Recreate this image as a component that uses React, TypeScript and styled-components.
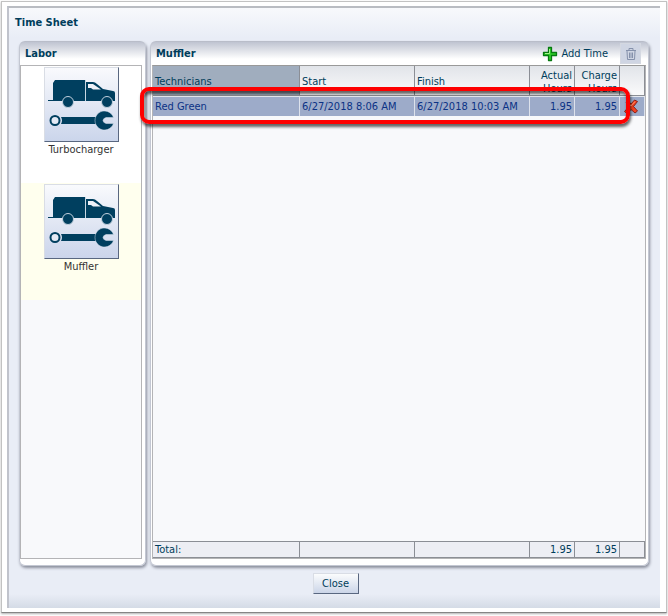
import React from "react";
import styled, { createGlobalStyle } from "styled-components";

const GlobalStyle = createGlobalStyle`
  *, *::before, *::after { box-sizing: border-box; }
  body {
    margin: 0;
    background: #fff;
    color: #003d5b;
    font-family: "DejaVu Sans Condensed", "Noto Sans", sans-serif;
    font-size: 11px;
    line-height: 13px;
  }
  button { font: inherit; color: inherit; margin: 0; padding: 0; }
`;

const Frame = styled.div`
  display: flex;
  height: 100vh;
  padding: 1px 1px 3px 1px;
`;

const Sheet = styled.div`
  flex: 1;
  display: flex;
  min-width: 0;
  padding: 4px 6px 4px 5px;
  background: #fff;
  border: 1px solid #c2c2c2;
  border-bottom-color: #858585;
  box-shadow: 0 1px 2px #b0b0b0;
`;

const Dialog = styled.main`
  flex: 1;
  display: flex;
  flex-direction: column;
  min-width: 0;
  padding: 4px 11px 0 10px;
  border-left: 2px solid #c0c3cc;
  border-top: 2px solid #b9bcc2;
  background: linear-gradient(#f8f9fc 0, #e9edf6 30px, #e9edf6 calc(100% - 14px), #d4dbe6 100%);
`;

const Title = styled.h1`
  margin: 0 0 0 -4px;
  padding: 4px 0 12px;
  font-size: 11px;
  line-height: 13px;
`;

const Panels = styled.div`
  flex: 1;
  display: grid;
  grid-template-columns: 127px minmax(0, 1fr);
  gap: 4px;
  min-height: 0;
`;

const Panel = styled.section`
  display: flex;
  flex-direction: column;
  min-width: 0;
  padding: 0 3px 6px 1px;
  border: 1px solid #c3c7d2;
  border-top-color: #b9bdc9;
  border-radius: 6px;
  background: linear-gradient(#bfc4d1 0, #fff 17px);
  box-shadow: 1px 2px 3px #8b8f9c;
`;

const PanelHeader = styled.header`
  display: flex;
  align-items: center;
  height: 23px;
  padding-left: 4px;
`;

const PanelTitle = styled.h2`
  flex: 1;
  margin: 0;
  font-size: 11px;
  line-height: 13px;
`;

const LaborList = styled.div`
  flex: 1;
  border: 1px solid #b4b4b6;
  background: #f8f9fb;
  margin-left: -1px;
`;

const LaborItem = styled.div<{ $selected?: boolean }>`
  display: flex;
  flex-direction: column;
  align-items: center;
  height: 117px;
  padding-top: 1px;
  background: ${(p) => (p.$selected ? "#ffffee" : "#fff")};
  color: #333;
`;

const LaborButton = styled.button`
  display: block;
  width: 75px;
  height: 75px;
  border: 1px solid #d9dde5;
  border-right-color: #596780;
  border-bottom-color: #596780;
  background: linear-gradient(#f9fafd, #cbd5eb);
`;

const LaborLabel = styled.label`
  margin-top: 1px;
`;

const AddButton = styled.button`
  display: flex;
  align-items: center;
  gap: 4px;
  margin-right: 12px;
  border: 0;
  background: none;
`;

const TrashButton = styled.button`
  display: grid;
  place-items: center;
  width: 21px;
  height: 21px;
  margin-right: 4px;
  border: 1px solid #d4d8e1;
  background: #cfd5e3;
`;

const Table = styled.table`
  flex: 1;
  display: flex;
  flex-direction: column;
  border: 1px solid #b4b4b6;
  border-top-color: #999;
  background: #f8f9fb;
`;

const Head = styled.thead`
  display: block;
`;

const Body = styled.tbody`
  flex: 1;
  display: block;
`;

const Foot = styled.tfoot`
  display: block;
`;

const Row = styled.tr`
  display: grid;
  grid-template-columns: minmax(0, 147fr) minmax(0, 115fr) minmax(0, 115fr) 45px 45px 25px;
`;

const HeadCell = styled.th<{ $active?: boolean; $right?: boolean }>`
  display: flex;
  align-items: center;
  justify-content: ${(p) => (p.$right ? "flex-end" : "flex-start")};
  height: 30px;
  padding: 2px 2px 0;
  font-weight: normal;
  text-align: ${(p) => (p.$right ? "right" : "left")};
  border-right: 1px solid #8b8e95;
  border-bottom: 1px solid #8b8e95;
  background: ${(p) => (p.$active ? "#a0adbe" : "linear-gradient(#e1e4e9, #fafafb)")};
`;

const Cell = styled.td<{ $right?: boolean }>`
  height: 20px;
  padding: 3px 2px;
  color: #0b3285;
  text-align: ${(p) => (p.$right ? "right" : "left")};
  white-space: nowrap;
  border-top: 1px solid #e6e9f0;
  border-right: 1px solid #dde2ec;
  background: #9dabc9;
`;

const ActionCell = styled(Cell)`
  display: grid;
  place-items: center start;
  padding: 0 2px;
`;

const TotalCell = styled.td<{ $right?: boolean }>`
  height: 17px;
  padding: 1px 2px;
  text-align: ${(p) => (p.$right ? "right" : "left")};
  border: solid #8b8e95;
  border-width: 1px 1px 1px 0;
  background: #edeef4;
`;

const DeleteButton = styled.button`
  display: block;
  width: 18px;
  height: 16px;
  border: 0;
  background: none;
`;

const Footer = styled.footer`
  display: flex;
  justify-content: center;
  height: 42px;
  padding: 7px 0 0 3px;
`;

const CloseButton = styled.button`
  width: 46px;
  height: 21px;
  border: 1px solid #d9dde5;
  border-right-color: #596780;
  border-bottom-color: #596780;
  background: linear-gradient(#fbfcfd, #cbd5e8);
`;

const TableArea = styled.div`
  position: relative;
  flex: 1;
  display: flex;
  min-width: 0;
  margin-right: -1px;
`;

const Highlight = styled.div`
  position: absolute;
  top: 22px;
  left: -12px;
  right: 16px;
  height: 37px;
  border: 4px solid #fe0000;
  border-radius: 9px;
  box-shadow: 1px 3px 3px rgba(0, 0, 0, 0.6), inset 1px 3px 3px rgba(0, 0, 0, 0.6);
  pointer-events: none;
`;

const VanIcon = () => (
  <svg width="73" height="73" viewBox="0 0 73 73" aria-hidden="true">
    <g fill="#003f5f">
      <path d="M8 15l2-3h30v21H3v-1h5z" />
      <path d="M41 14h7q2 0 4 2l6 5 10 2q2 0 2 2v8H41z" />
      <path d="M43 16h5l8 5.500h-8l-2-1.500h-3z" fill="#edf1f8" />
      <path d="M40.500 12v21" stroke="#c8d7e2" fill="none" />
      <circle cx="23" cy="34" r="5.500" stroke="#c3d1de" />
      <circle cx="62" cy="34" r="5.500" stroke="#c3d1de" />
      <path d="M16 49h36v7H16q2-3.500 0-7z" />
      <circle cx="10" cy="52.500" r="4.500" fill="#e4eaf5" stroke="#003f5f" strokeWidth="2" />
      <path
        d="M68.500 49.500A9.500 9.500 0 1 0 68.500 55.500H61q-3-1-3-3t3-3z"
        stroke="#dbe3ef"
        strokeWidth=".5"
      />
    </g>
  </svg>
);

const PlusIcon = () => (
  <svg width="16" height="16" viewBox="0 0 16 16" aria-hidden="true">
    <path d="M6.500 1.500h3v5h5v3h-5v5h-3v-5h-5v-3h5z" fill="#2fce28" stroke="#087a12" strokeWidth="1.300" strokeLinejoin="round" />
    <path d="M7.500 3v4.500H3" fill="none" stroke="#a5f58c" />
  </svg>
);

const TrashIcon = () => (
  <svg width="12" height="14" viewBox="0 0 12 14" fill="none" stroke="#8591ab" aria-hidden="true">
    <path d="M1 3.500h10M4 3V1.500h4V3M2 4l.5 8.500h7L10 4M4.500 5.500v5.500M6 5.500v5.500M7.500 5.500v5.500" />
  </svg>
);

const CrossIcon = () => (
  <svg width="18" height="16" viewBox="0 0 18 16" aria-hidden="true">
    <path
      d="M4 3l2-1.500L9 5l3.500-4L15.500 2.500 11.500 7.500l4 4.500-2.500 2L9 10.500 5 14.500l-2.500-2L6.500 8z"
      fill="#f4401f"
      stroke="#8b2219"
      strokeLinejoin="round"
    />
    <path d="M5 3l4 4 4-4.500" fill="none" stroke="#ff9a76" />
  </svg>
);

const jobs = [
  { id: "turbocharger", name: "Turbocharger", selected: false },
  { id: "muffler", name: "Muffler", selected: true },
];

export default function App() {
  return (
    <>
      <GlobalStyle />
      <Frame>
        <Sheet>
          <Dialog>
            <Title>Time Sheet</Title>
            <Panels>
              <Panel>
                <PanelHeader>
                  <PanelTitle>Labor</PanelTitle>
                </PanelHeader>
                <LaborList>
                  {jobs.map((job) => (
                    <LaborItem key={job.id} $selected={job.selected}>
                      <LaborButton id={job.id}>
                        <VanIcon />
                      </LaborButton>
                      <LaborLabel htmlFor={job.id}>{job.name}</LaborLabel>
                    </LaborItem>
                  ))}
                </LaborList>
              </Panel>
              <Panel>
                <PanelHeader>
                  <PanelTitle>Muffler</PanelTitle>
                  <AddButton>
                    <PlusIcon />
                    Add Time
                  </AddButton>
                  <TrashButton aria-label="Delete">
                    <TrashIcon />
                  </TrashButton>
                </PanelHeader>
                <TableArea>
                  <Table>
                    <Head>
                      <Row>
                        <HeadCell $active>Technicians</HeadCell>
                        <HeadCell>Start</HeadCell>
                        <HeadCell>Finish</HeadCell>
                        <HeadCell $right>Actual Hours</HeadCell>
                        <HeadCell $right>Charge Hours</HeadCell>
                        <HeadCell />
                      </Row>
                    </Head>
                    <Body>
                      <Row>
                        <Cell>Red Green</Cell>
                        <Cell>6/27/2018 8:06 AM</Cell>
                        <Cell>6/27/2018 10:03 AM</Cell>
                        <Cell $right>1.95</Cell>
                        <Cell $right>1.95</Cell>
                        <ActionCell>
                          <DeleteButton aria-label="Remove entry">
                            <CrossIcon />
                          </DeleteButton>
                        </ActionCell>
                      </Row>
                    </Body>
                    <Foot>
                      <Row>
                        <TotalCell>Total:</TotalCell>
                        <TotalCell />
                        <TotalCell />
                        <TotalCell $right>1.95</TotalCell>
                        <TotalCell $right>1.95</TotalCell>
                        <TotalCell />
                      </Row>
                    </Foot>
                  </Table>
                  <Highlight />
                </TableArea>
              </Panel>
            </Panels>
            <Footer>
              <CloseButton>Close</CloseButton>
            </Footer>
          </Dialog>
        </Sheet>
      </Frame>
    </>
  );
}
